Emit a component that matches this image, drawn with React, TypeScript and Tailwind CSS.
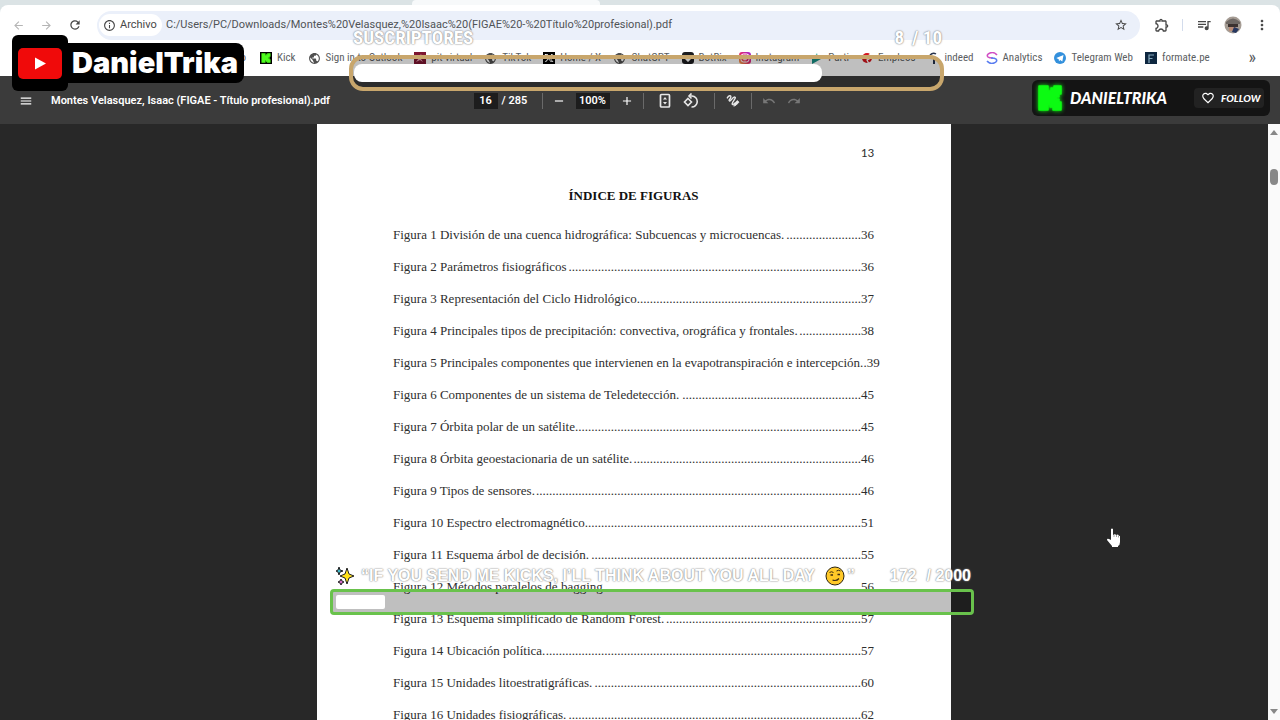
import type { ReactNode } from "react";
import { FaXTwitter } from "react-icons/fa6";
import {
  MdArrowBack,
  MdArrowForward,
  MdRefresh,
  MdInfoOutline,
  MdStarBorder,
  MdOutlineExtension,
  MdQueueMusic,
  MdMoreVert,
  MdMenu,
  MdRemove,
  MdAdd,
  MdUndo,
  MdRedo,
  MdPublic,
  MdFavoriteBorder,
} from "react-icons/md";

// title, page number, leader dots
const figures: [string, number, number][] = [
  ["Figura 1 División de una cuenca hidrográfica: Subcuencas y microcuencas.", 36, 23],
  ["Figura 2 Parámetros fisiográficos", 36, 90],
  ["Figura 3 Representación del Ciclo Hidrológico.", 37, 68],
  ["Figura 4 Principales tipos de precipitación: convectiva, orográfica y frontales.", 38, 19],
  ["Figura 5 Principales componentes que intervienen en la evapotranspiración e intercepción.", 39, 1],
  ["Figura 6 Componentes de un sistema de Teledetección.", 45, 55],
  ["Figura 7 Órbita polar de un satélite.", 45, 87],
  ["Figura 8 Órbita geoestacionaria de un satélite.", 46, 70],
  ["Figura 9 Tipos de sensores.", 46, 100],
  ["Figura 10 Espectro electromagnético.", 51, 84],
  ["Figura 11 Esquema árbol de decisión.", 55, 83],
  ["Figura 12 Métodos paralelos de bagging", 56, 79],
  ["Figura 13 Esquema simplificado de Random Forest.", 57, 60],
  ["Figura 14 Ubicación política.", 57, 97],
  ["Figura 15 Unidades litoestratigráficas.", 60, 82],
  ["Figura 16 Unidades fisiográficas.", 62, 90],
];

function KickMark({ className }: { className: string }) {
  return (
    <svg viewBox="0 0 24 26" className={className} aria-hidden="true">
      <path
        d="M1 1h9v5h3V3h3V1h7v8h-2v3h-3v2h3v3h2v8h-8v-3h-3v-3h-2v6H1z"
        fill="currentColor"
        stroke="currentColor"
        strokeWidth="1.5"
        strokeLinejoin="round"
      />
    </svg>
  );
}

function Globe() {
  return <MdPublic className="size-[13px] text-[#505050]" />;
}

const bookmarks: { label: string; icon: ReactNode }[] = [
  {
    label: "Kick",
    icon: (
      <span className="flex size-3 items-center justify-center bg-black">
        <KickMark className="size-[10px] text-[#4dfc1e]" />
      </span>
    ),
  },
  { label: "Sign in to Outlook", icon: <Globe /> },
  {
    label: "pit virtual",
    icon: (
      <svg viewBox="0 0 12 12" className="size-3">
        <rect width="12" height="12" fill="#7d1530" />
        <path d="M2 10l3-4-2-3 3 1 1-2 1 3 2 1-3 1 2 3-3-2z" fill="#e8a7b5" />
      </svg>
    ),
  },
  { label: "TikTok", icon: <Globe /> },
  {
    label: "Home / X",
    icon: (
      <span className="flex size-3 items-center justify-center bg-black">
        <FaXTwitter className="size-[10px] text-white" />
      </span>
    ),
  },
  { label: "ChatGPT", icon: <Globe /> },
  {
    label: "BotRix",
    icon: (
      <svg viewBox="0 0 12 12" className="size-3">
        <rect width="12" height="12" rx="3" fill="#1d1d1f" />
        <path d="M3 3l3 1.5L9 3v4L6 10 3 7z" fill="#fff" />
      </svg>
    ),
  },
  {
    label: "Instagram",
    icon: (
      <svg viewBox="0 0 12 12" className="size-3">
        <defs>
          <linearGradient id="insta" x1="1" y1="0" x2="0" y2="1">
            <stop offset="0" stopColor="#9b22d6" />
            <stop offset="0.5" stopColor="#e5286e" />
            <stop offset="1" stopColor="#fbb040" />
          </linearGradient>
        </defs>
        <rect width="12" height="12" rx="3" fill="url(#insta)" />
        <rect x="2" y="2" width="8" height="8" rx="2.4" fill="none" stroke="#fff" />
        <circle cx="6" cy="6" r="1.9" fill="none" stroke="#fff" />
      </svg>
    ),
  },
  {
    label: "Parti",
    icon: (
      <svg viewBox="0 0 12 12" className="size-3">
        <path d="M1 4l9 3-9 5z" fill="#168f84" />
        <path d="M4 4l2-3 1 4 4-2-2 4z" fill="#5bb7a8" />
      </svg>
    ),
  },
  {
    label: "Empleos",
    icon: (
      <svg viewBox="0 0 12 12" className="size-3">
        <circle cx="6" cy="6" r="5" fill="#d3141d" />
        <path d="M12 1L5 5l5 1-4 2 2 4" fill="none" stroke="#fff" strokeWidth="1.3" />
      </svg>
    ),
  },
  {
    label: "indeed",
    icon: (
      <svg viewBox="0 0 12 12" className="size-3">
        <path d="M3 3q3-3 6-1" fill="none" stroke="#26324d" strokeWidth="1.5" />
        <path d="M7 5v7" stroke="#26324d" strokeWidth="2" />
      </svg>
    ),
  },
  {
    label: "Analytics",
    icon: (
      <svg viewBox="0 0 12 12" className="size-3" fill="none" strokeWidth="1.6">
        <path d="M11 3Q8-.5 4 1T2 5q1 1 5 1" stroke="#d14fc4" />
        <path d="M1 9q3 3.500 7 2t2-4q-1-1-5-1" stroke="#5a7df0" />
      </svg>
    ),
  },
  {
    label: "Telegram Web",
    icon: (
      <svg viewBox="0 0 12 12" className="size-3">
        <circle cx="6" cy="6" r="6" fill="#3390dc" />
        <path d="M2.300 6L9.500 3 8.300 9.500 6.200 8 5 9.200 4.700 7.200z" fill="#fff" />
      </svg>
    ),
  },
  {
    label: "formate.pe",
    icon: (
      <svg viewBox="0 0 12 12" className="size-3">
        <rect width="12" height="12" fill="#0e2740" />
        <path d="M4 11V3h5M4 6.500h3.500" fill="none" stroke="#86a9bd" strokeWidth="1.2" />
      </svg>
    ),
  },
];

function Divider() {
  return <span className="h-4 w-px bg-[#6a6a6a]" />;
}

function AddressRow() {
  return (
    <div className="flex h-10 items-center pr-[10px] pl-3 text-[#474747]">
      <div className="flex w-[85px] items-center gap-[15px]">
        <button aria-label="Atrás" className="text-[#b5b5b5]"><MdArrowBack className="size-[13px]" /></button>
        <button aria-label="Adelante" className="text-[#b5b5b5]"><MdArrowForward className="size-[13px]" /></button>
        <button aria-label="Recargar"><MdRefresh className="size-[14px]" /></button>
      </div>
      <div className="flex h-[29px] flex-1 items-center rounded-full bg-[#ebf0fa] pr-3 pl-[2px]">
        <button className="flex h-[22px] items-center gap-1 rounded-full bg-white pr-[6px] pl-1 text-[11px]">
          <MdInfoOutline className="size-[13px]" />
          <span className="w-9 text-left">Archivo</span>
        </button>
        <input
          aria-label="Dirección"
          readOnly
          className="min-w-0 flex-1 bg-transparent pl-1 text-[11px] text-[#505356] outline-none"
          value="C:/Users/PC/Downloads/Montes%20Velasquez,%20Isaac%20(FIGAE%20-%20Título%20profesional).pdf"
        />
        <button aria-label="Favorito"><MdStarBorder className="size-[14px]" /></button>
      </div>
      <div className="flex items-center gap-3 pl-[14px]">
        <button aria-label="Extensiones"><MdOutlineExtension className="size-4" /></button>
        <span className="h-3 w-px bg-[#d3dcec]" />
        <button aria-label="Multimedia" className="pl-px"><MdQueueMusic className="size-4" /></button>
        <button aria-label="Perfil">
          <svg viewBox="0 0 18 18" className="size-[18px]">
            <circle cx="9" cy="9" r="8.500" fill="#a59c94" />
            <path d="M2 6q7-7 14 0v2H2z" fill="#6e6864" />
            <path d="M4 8h10v3H4z" fill="#3b3230" />
            <path d="M5 11h7v4H5z" fill="#b98d78" />
            <path d="M10 11l5 2-3 4-4-1z" fill="#26375f" />
          </svg>
        </button>
        <button aria-label="Menú"><MdMoreVert className="size-4" /></button>
      </div>
    </div>
  );
}

function BookmarksRow() {
  return (
    <nav
      aria-label="Marcadores"
      className="flex h-[31px] items-start pr-6 font-['Roboto_Condensed','Roboto',sans-serif] text-[11px] leading-[26px] text-[#5b5e62]"
    >
      <div className="flex w-[260px] shrink-0 items-center justify-between pr-[14px] pl-3">
        <span>⠿</span>
        <span>o</span>
      </div>
      <ul className="flex min-w-0 flex-1 gap-3">
        {bookmarks.map((b) => (
          <li key={b.label}>
            <a href="#" className="flex items-center gap-[5px] whitespace-nowrap">
              {b.icon}
              {b.label}
            </a>
          </li>
        ))}
      </ul>
      <button aria-label="Más marcadores" className="text-[18px] leading-6">»</button>
    </nav>
  );
}

function PdfToolbar() {
  return (
    <header className="grid h-12 shrink-0 grid-cols-[1fr_auto_1fr] items-center bg-[#3b3b3b] pt-[2px] text-[11px] font-semibold text-white">
      <div className="flex items-center gap-[18px] pl-[19px] whitespace-nowrap">
        <button aria-label="Menú del documento"><MdMenu className="size-[14px]" /></button>
        <h1>Montes Velasquez, Isaac (FIGAE - Título profesional).pdf</h1>
      </div>
      <div className="flex items-center pr-[6px]">
        <input
          aria-label="Página"
          defaultValue="16"
          className="h-4 w-6 bg-[#1d1d1d] text-center"
        />
        <span className="w-11 pl-1">/ 285</span>
        <Divider />
        <div className="flex w-[100px] items-center justify-center gap-[10px]">
          <button aria-label="Alejar"><MdRemove className="size-[14px]" /></button>
          <input
            aria-label="Zoom"
            defaultValue="100%"
            className="h-4 w-[34px] bg-[#1d1d1d] text-center"
          />
          <button aria-label="Acercar"><MdAdd className="size-[14px]" /></button>
        </div>
        <Divider />
        <div className="flex w-[70px] items-center justify-center gap-[11px]">
          <button aria-label="Ajustar a la página">
            <svg viewBox="0 0 14 16" className="h-4 w-[14px]" fill="none" stroke="#e8e8e8" strokeWidth="1.700">
              <rect x="2.500" y="1.500" width="9" height="12.500" rx="1" />
              <path d="M5 6.500l2-2.500 2 2.500zM5 9l2 2.500L9 9z" fill="#e8e8e8" stroke="none" />
            </svg>
          </button>
          <button aria-label="Girar">
            <svg viewBox="0 0 16 16" className="size-4" fill="none" stroke="#e8e8e8" strokeWidth="1.600">
              <path d="M5 5.500L8.500 9 5 12.500 1.500 9z" />
              <path d="M6 3h3a5.300 5.300 0 1 1-.5 11" />
              <path d="M8.500.5L6 3l2.500 2.500" />
            </svg>
          </button>
        </div>
        <Divider />
        <button aria-label="Dibujar" className="flex w-9 justify-center">
          <svg viewBox="0 0 16 16" className="size-[14px]" fill="none" stroke="#e8e8e8" strokeWidth="1.600" strokeLinecap="round" strokeLinejoin="round">
            <path d="M1.500 4.500C3 1.500 6 1 5.500 3.500S2.500 7 4 8s3.500-5 6-4.500S7 9 7 11s2 .5 3-.5" />
            <path d="M9 13.500l.8-3L13 7.500l1.800 1.800L11.800 12.500z" fill="#e8e8e8" strokeWidth="1" />
          </svg>
        </button>
        <Divider />
        <div className="flex gap-[11px] pl-[10px] text-[#777]">
          <button aria-label="Deshacer"><MdUndo className="size-[14px]" /></button>
          <button aria-label="Rehacer"><MdRedo className="size-[14px]" /></button>
        </div>
      </div>
    </header>
  );
}

function DocumentPage() {
  return (
    <article className="w-[634px] bg-white pt-5 pr-[77px] pl-[76px] font-['Liberation_Serif',serif] text-[13px] text-[#2e2e2e]">
      <p className="text-right font-['Carlito','Lato',sans-serif] leading-[18px]">13</p>
      <h2 className="pt-6 text-center leading-5 font-bold text-[#111]">ÍNDICE DE FIGURAS</h2>
      <ol className="pt-[13px]">
        {figures.map(([title, page, dots]) => (
          <li key={title} className="flex h-8 items-center justify-between whitespace-nowrap">
            <span>{title}</span>
            <span>{".".repeat(dots)}{page}</span>
          </li>
        ))}
      </ol>
    </article>
  );
}

function YouTubeBadge() {
  return (
    <div className="absolute top-[35px] left-3 flex items-center text-white">
      <div className="flex h-14 w-14 items-center justify-center rounded-md bg-black">
        <svg viewBox="0 0 44 31" className="h-[31px] w-11">
          <rect width="44" height="31" rx="5" fill="#f00a0a" />
          <path d="M17 9.500v12L28 15.500z" fill="#fff" />
        </svg>
      </div>
      <div className="flex h-10 w-44 items-center rounded-r-lg bg-black pl-1 font-['Inter',sans-serif] text-[29px] font-black">
        DanielTrika
      </div>
    </div>
  );
}

function KickBadge() {
  return (
    <div className="absolute top-20 right-[10px] flex h-9 w-[238px] items-center rounded-md bg-[#141414] px-[6px] font-['Lato',sans-serif] font-black text-white italic">
      <KickMark className="h-[26px] w-6 text-[#0cfb12] drop-shadow-[0_0_2px_#0cfb12]" />
      <span className="flex-1 pl-2 text-[16px]">DANIELTRIKA</span>
      <button className="flex h-5 w-[70px] items-center gap-[6px] rounded bg-[#222] pl-[7px] text-[10px] italic">
        <MdFavoriteBorder className="size-[14px]" />
        FOLLOW
      </button>
    </div>
  );
}

function SubscribersGoal() {
  return (
    <section className="absolute top-[23px] left-[349px] w-[595px] font-['Roboto_Condensed','Roboto',sans-serif] text-[19px] font-bold text-white">
      <div className="flex h-8 items-center justify-between pr-[2px] pb-[2px] pl-1 leading-6 [text-shadow:0_0_2px_#888,0_0_1px_#888]">
        <span>SUSCRIPTORES</span>
        <span className="flex gap-2"><span>8</span><span>/ 10</span></span>
      </div>
      <div role="progressbar" aria-label="Suscriptores" aria-valuenow={8} aria-valuemax={10} className="h-9 rounded-[14px] border-4 border-[#c8a66c] bg-black/25 px-px py-[5px]">
        <div className="h-[18px] rounded-lg bg-white" style={{ width: `${(8 / 10) * 100}%` }} />
      </div>
    </section>
  );
}

function KicksGoal() {
  return (
    <section className="absolute top-[563px] left-[330px] w-[644px] font-['Liberation_Sans',sans-serif] text-[16px] font-bold text-white">
      <div className="flex h-[26px] items-center justify-between pr-[3px] pl-[5px] whitespace-nowrap [text-shadow:0_0_2px_#888,0_0_1px_#888]">
        <span className="flex items-center">
          <svg viewBox="0 0 20 20" className="mr-[6px] size-5" stroke="#222" strokeWidth="1" strokeLinejoin="round">
            <path d="M12 2l2 6 5 2-5 2-2 6-2-6-5-2 5-2z" fill="#ffe21a" />
            <path d="M4 1l1 3 3 1-3 1-1 3-1-3-2-1 2-1z" fill="#3fb8c8" />
            <path d="M6 13l1 2 2 1-2 1-1 2-1-2-2-1 2-1z" fill="#d56bc8" />
          </svg>
          “IF YOU SEND ME KICKS, I’LL THINK ABOUT YOU ALL DAY
          <svg viewBox="0 0 20 20" className="mr-[2px] ml-[10px] size-5">
            <circle cx="10" cy="10" r="9" fill="#ffc928" stroke="#2a2410" />
            <path d="M4.500 6.500q2-1.500 4 0M11.500 5q2-1.500 4 0" fill="none" stroke="#3d2b12" />
            <path d="M5.500 9H8M12.500 8.500H15" stroke="#3d2b12" strokeWidth="1.600" />
            <path d="M7.500 14q4 1.500 6.500-1.500" fill="none" stroke="#3d2b12" strokeWidth="1.200" />
          </svg>
          ”
        </span>
        <span className="flex gap-[10px]"><span>172</span><span>/ 2000</span></span>
      </div>
      <div role="progressbar" aria-label="Kicks" aria-valuenow={172} aria-valuemax={2000} className="h-[26px] rounded border-3 border-[#69c24c] bg-black/25 p-[3px]">
        <div className="h-[14px] rounded-xs bg-white" style={{ width: `${(172 / 2000) * 90}%` }} />
      </div>
    </section>
  );
}

export default function App() {
  return (
    <div className="relative flex h-screen flex-col overflow-hidden bg-[#282828] font-['Roboto',sans-serif]">
      <div className="shrink-0 bg-[#dbe3e5]">
        <div className="flex h-[5px]">
          <div className="ml-[412px] w-[188px] rounded-t-sm bg-[#f7f9fa]" />
        </div>
        <div className="rounded-t-lg bg-white">
          <AddressRow />
          <BookmarksRow />
        </div>
      </div>
      <PdfToolbar />
      <div className="flex min-h-0 flex-1">
        <main className="flex flex-1 justify-center overflow-hidden">
          <DocumentPage />
        </main>
        <div className="flex w-3 flex-col items-center bg-[#fafafa] py-[6px] text-[#888]">
          <svg viewBox="0 0 8 5" className="h-[5px] w-2"><path d="M0 5l4-5 4 5z" fill="currentColor" /></svg>
          <span className="mt-[34px] h-4 w-2 rounded-full bg-current" />
          <svg viewBox="0 0 8 5" className="mt-auto h-[5px] w-2"><path d="M0 0l4 5 4-5z" fill="currentColor" /></svg>
        </div>
      </div>

      <SubscribersGoal />
      <YouTubeBadge />
      <KickBadge />
      <KicksGoal />
      <svg viewBox="0 0 14 20" className="absolute top-[528px] left-[1107px] h-5 w-[14px]">
        <path d="M4 1q1-1 2 0v6l2-1 1 1 2-.5.8 1.200L13 8v6q0 3-2 4v1H5v-1L0 12q0-2 2-1l2 1z" fill="#fff" />
        <path d="M7 6.500V9M9.500 7v2M11.500 8v1.500" stroke="#444" strokeWidth=".5" />
      </svg>
    </div>
  );
}
